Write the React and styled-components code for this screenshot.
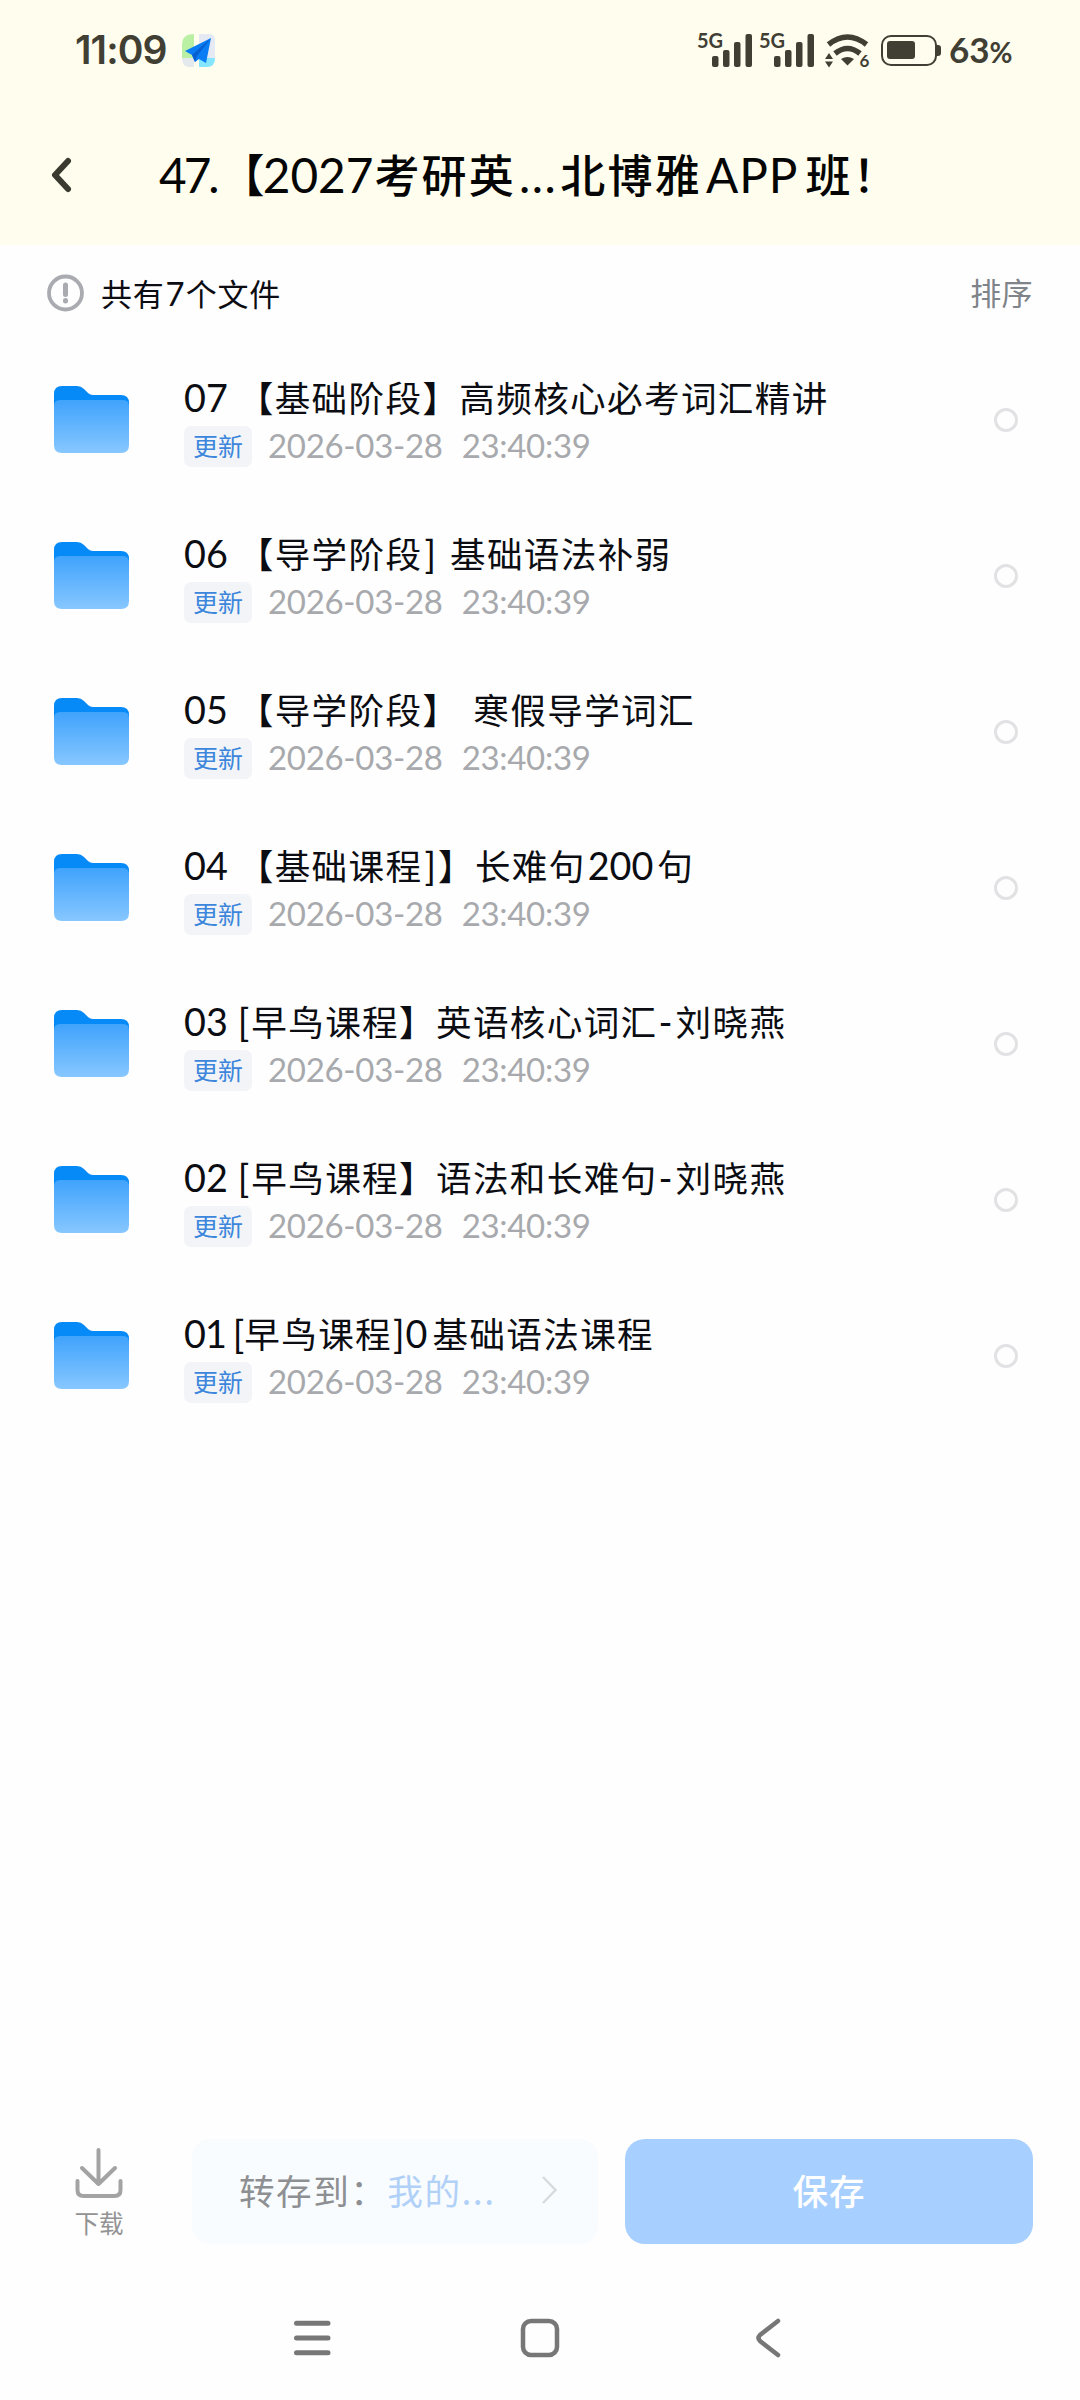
// dependences
import React from 'react';

// styles
import styled, { createGlobalStyle } from 'styled-components';

const GlobalStyle = createGlobalStyle`
    * {
        box-sizing: border-box;
    }

    body {
        margin: 0;
        background: #fefefe;
        font-family: Lato, "Noto Sans CJK SC", sans-serif;
        color: #0b0d12;
    }
`;
const Screen = styled.div`
    width: 1080px;
    height: 2400px;
    display: flex;
    flex-direction: column;
    overflow: hidden;
    background: #fefefe;
`;
const TopArea = styled.header`
    height: 245px;
    background: #fffded;
`;
const StatusBar = styled.div`
    height: 104px;
    padding: 0 67px 0 75px;
    display: flex;
    justify-content: space-between;
    color: #413f34;
`;
const StatusGroup = styled.div`
    display: flex;
    align-items: center;
    height: 100px;
`;
const Clock = styled.span`
    width: 106px;
    font: 600 39px/50px Inter, sans-serif;
    letter-spacing: -0.9px;
`;
const Signal = styled.div`
    display: flex;
    width: 62px;
    height: 36px;
`;
const SignalLabel = styled.span`
    width: 14px;
    margin-left: -1px;
    margin-right: 1px;
    font: 700 20px/16px Lato, sans-serif;
    white-space: nowrap;
`;
const Battery = styled.div`
    width: 56px;
    height: 31px;
    padding: 4px;
    border: 2.5px solid #413f34;
    border-radius: 10px;
`;
const BatteryFill = styled.div`
    width: 28px;
    height: 18px;
    border-radius: 3px;
    background: #413f34;
`;
const BatteryNub = styled.div`
    width: 4px;
    height: 11px;
    margin-right: 8px;
    border-radius: 0 3px 3px 0;
    background: #413f34;
`;
const Percent = styled.span`
    width: 64px;
    font: 700 35px/50px Lato, sans-serif;
    white-space: nowrap;

    small {
        font-size: 28px;
    }
`;
const TitleBar = styled.div`
    height: 141px;
    display: flex;
    align-items: center;
    padding-left: 48px;
`;
const Title = styled.h1`
    margin: 0 0 0 83px;
    display: flex;
    align-items: baseline;
    color: #050505;
    font-size: 45px;
    font-weight: 500;
    line-height: 66px;
    letter-spacing: 2.2px;
    white-space: pre;
`;
const Run = styled.span`
    margin-left: ${props => props.$gap || 0}px;
    font-family: "Noto Sans CJK SC", sans-serif;
`;
const LatinRun = styled(Run)`
    font-family: Lato, sans-serif;
    font-size: 1.06em;
    font-weight: 400;
    letter-spacing: ${props => props.$spacing || 0}px;
`;
const Summary = styled.div`
    height: 96px;
    padding: 0 47px 0 46px;
    display: flex;
    align-items: center;
`;
const Count = styled.div`
    flex: 1;
    margin-left: 17px;
    display: flex;
    align-items: baseline;
    font-size: 31px;
    line-height: 46px;
    letter-spacing: 0.8px;
`;
const Sort = styled.span`
    color: #7e8489;
    font-size: 31px;
    line-height: 46px;
    letter-spacing: 0.4px;
`;
const FileList = styled.ul`
    flex: 1;
    margin: 0;
    padding: 0;
    list-style: none;
`;
const FileRow = styled.li`
    height: 156px;
    padding: 1px 62px 0 54px;
    display: flex;
    align-items: center;
`;
const FileInfo = styled.div`
    flex: 1;
    height: 100px;
    margin-left: 55px;
`;
const FileName = styled.div`
    height: 56px;
    display: flex;
    align-items: baseline;
    font-size: 35.6px;
    line-height: 54px;
    letter-spacing: 1.35px;
    white-space: pre;
`;
const FileMeta = styled.div`
    display: flex;
    align-items: center;
    height: 41px;
    color: #a7a9ad;
    font-size: 33px;
`;
const Badge = styled.span`
    width: 68px;
    height: 41px;
    margin-right: 16px;
    border-radius: 7px;
    background: #f2f4f7;
    color: #3c86dc;
    font-size: 25px;
    line-height: 40px;
    text-align: center;
`;
const Stamp = styled.span`
    height: 41px;
    margin-right: 19px;
    line-height: 38px;
    letter-spacing: -0.3px;
`;
const Radio = styled.span`
    width: 24px;
    height: 24px;
    border: 3px solid #e2e2e4;
    border-radius: 50%;
`;
const ActionBar = styled.footer`
    height: 138px;
    padding: 0 47px 0 75px;
    display: flex;
    align-items: flex-start;
`;
const Download = styled.div`
    width: 48px;
    margin-right: 69px;
    padding-top: 7px;
    display: flex;
    flex-direction: column;
    align-items: center;
    gap: 6px;
    color: #939393;
    font-size: 24.5px;
    line-height: 36px;
    white-space: nowrap;
`;
const Target = styled.div`
    width: 406px;
    height: 105px;
    margin-right: 27px;
    padding: 0 39px 4px 47px;
    display: flex;
    align-items: center;
    border-radius: 18px;
    background: #f9fcfe;
    color: #8d8f92;
    font-family: "Noto Sans CJK SC", sans-serif;
    font-size: 35.6px;
    letter-spacing: 1.5px;
`;
const TargetName = styled.span`
    flex: 1;
    color: #b1d1f8;
`;
const SaveButton = styled.button`
    flex: 1;
    height: 105px;
    padding: 0 0 4px;
    border: 0;
    border-radius: 20px;
    background: #a7cfff;
    color: #fff;
    font: 500 35.6px "Noto Sans CJK SC", sans-serif;
    letter-spacing: 1px;
`;
const NavBar = styled.nav`
    height: 123px;
    padding: 39px 296px 0 292px;
    display: flex;
    justify-content: space-between;
`;

// [text, gap before it, letter spacing]
const title = [
    ['47.', 0, -3],
    ['【', 3],
    ['2027', -4],
    ['考研英', 1],
    ['...', 3, 1.5],
    ['北博雅', 3],
    ['APP', 4, 1],
    ['班！', 7]
];
const files = [
    [['07'], ['【基础阶段】高频核心必考词汇精讲', 10]],
    [['06'], ['【导学阶段', 10], [']', 2], ['基础语法补弱', 14]],
    [['05'], ['【导学阶段】', 10], ['寒假导学词汇', 14]],
    [['04'], ['【基础课程', 10], [']', 2], ['】长难句', 2], ['200', 2], ['句', 4]],
    [['03'], ['[', 10], ['早鸟课程】英语核心词汇', 2], ['-', 1, 3], ['刘晓燕', 0]],
    [['02'], ['[', 10], ['早鸟课程】语法和长难句', 2], ['-', 1, 3], ['刘晓燕', 0]],
    [['01', 0, -1], ['[', 7], ['早鸟课程', 0], [']', 1], ['0', 1], ['基础语法课程', 5]]
];

// Latin pieces use their own font, so the name is drawn run by run
function Runs({ parts }) {
    return parts.map(([text, gap, spacing], i) =>
        /^[\x20-\x7e]+$/.test(text)
            ? <LatinRun key={i} $gap={gap} $spacing={spacing}>{text}</LatinRun>
            : <Run key={i} $gap={gap}>{text}</Run>
    );
}

function AppLogo() {
    return <svg width="35" height="35" viewBox="0 0 35 35">
        <path d="M13 1v24H1V12Q1 1 13 1Z" fill="#b9f0a4" />
        <path d="M18 1h10q6 0 6 6v18H18Z" fill="#e4e9f3" />
        <path d="M1 25h12v9H9Q1 34 1 25Z" fill="#e4e9ee" />
        <path d="M18 25h16q0 9-8 9h-8Z" fill="#86e6ff" />
        <path d="M30 5 4 18l7 4 3 7 4-3 7 4Z" fill="#0a7df5" />
        <path d="M30 5 11 22l3 7 2-6Z" fill="#075fd0" />
    </svg>
}

function SignalIcon() {
    return <Signal>
        <SignalLabel>5G</SignalLabel>
        <svg width="42" height="36" viewBox="0 0 42 36" fill="currentColor">
            <rect x="0" y="24" width="6.5" height="11" rx="2" />
            <rect x="11" y="18" width="6.5" height="17" rx="2" />
            <rect x="22" y="10" width="6.5" height="25" rx="2" />
            <rect x="33.5" y="2" width="6.5" height="33" rx="2" />
        </svg>
    </Signal>
}

function WifiIcon() {
    return <svg width="59" height="48" viewBox="0 -6 59 48">
        <g fill="none" stroke="currentColor" strokeWidth="5.5">
            <path d="M6.5 12.500q19-15 38 0" />
            <path d="M13 21.500q12.500-10 25 0" />
        </g>
        <path d="M19 27q6.500-4 13 0l-6.500 6.500Z" fill="currentColor" />
        <path d="m3 27 4-6 4 6Zm0 2.500h8l-4 6Z" fill="currentColor" />
        <text x="37.500" y="34.500" fontFamily="Lato" fontWeight="700" fontSize="17" fill="currentColor">6</text>
    </svg>
}

function FolderIcon() {
    return <svg width="75" height="67" viewBox="0 0 75 67">
        <defs>
            <linearGradient id="folder" x1="0" y1="0" x2="0" y2="1">
                <stop offset="0" stopColor="#40a3fc" />
                <stop offset="1" stopColor="#87c7ff" />
            </linearGradient>
        </defs>
        <path d="M0 8q0-8 8-8h15q4 0 7 3l4 4q2 2 5 2h28q8 0 8 8v10H0Z" fill="#058af7" />
        <path d="M0 20q0-6 6-6h63q6 0 6 6v39q0 8-8 8H8q-8 0-8-8Z" fill="url(#folder)" />
    </svg>
}

export default function App() {
    return <>
        <GlobalStyle />

        <Screen>
            <TopArea>
                <StatusBar>
                    <StatusGroup>
                        <Clock>11:09</Clock>
                        <AppLogo />
                    </StatusGroup>
                    <StatusGroup>
                        <SignalIcon />
                        <SignalIcon />
                        <WifiIcon />
                        <Battery><BatteryFill /></Battery>
                        <BatteryNub />
                        <Percent>63<small>%</small></Percent>
                    </StatusGroup>
                </StatusBar>

                <TitleBar>
                    <svg width="28" height="42" viewBox="0 0 28 42" fill="none" stroke="#3b3a30" strokeWidth="6" strokeLinecap="round" strokeLinejoin="round">
                        <path d="M20 7 7 21l13 14" />
                    </svg>
                    <Title><Runs parts={title} /></Title>
                </TitleBar>
            </TopArea>

            <Summary>
                <svg width="38" height="38" viewBox="0 0 38 38" fill="none" stroke="#a9abb0">
                    <circle cx="19.500" cy="19" r="16.500" strokeWidth="3.800" />
                    <path d="M19.500 11v9.500M19.500 26.500v.5" strokeWidth="5" strokeLinecap="round" />
                </svg>
                <Count><Runs parts={[['共有'], ['7', 1], ['个文件', 1]]} /></Count>
                <Sort>排序</Sort>
            </Summary>

            <FileList>
                {files.map(parts => <FileRow key={parts[0][0]}>
                    <FolderIcon />
                    <FileInfo>
                        <FileName><Runs parts={parts} /></FileName>
                        <FileMeta>
                            <Badge>更新</Badge>
                            <Stamp>2026-03-28</Stamp>
                            <Stamp>23:40:39</Stamp>
                        </FileMeta>
                    </FileInfo>
                    <Radio />
                </FileRow>)}
            </FileList>

            <ActionBar>
                <Download>
                    <svg width="48" height="54" viewBox="0 0 48 54" fill="none" stroke="#a3a3a3" strokeWidth="4" strokeLinecap="round" strokeLinejoin="round">
                        <path d="M23.500 4v34M7 22l16.500 16L40 22M2.500 35v9q0 6 6 6h31q6 0 6-6v-9" />
                    </svg>
                    下载
                </Download>
                <Target>
                    转存到：
                    <TargetName>我的...</TargetName>
                    <svg width="18" height="34" viewBox="0 0 18 34" fill="none" stroke="#d8dadd" strokeWidth="2.500">
                        <path d="m2 4 12.500 13L2 30" />
                    </svg>
                </Target>
                <SaveButton>保存</SaveButton>
            </ActionBar>

            <NavBar>
                <svg width="41" height="44" viewBox="0 0 41 44" stroke="#777" strokeWidth="5" strokeLinecap="round">
                    <path d="M4.500 7.300H36M4.500 22H36M4.500 36.700H36" />
                </svg>
                <svg width="44" height="44" viewBox="0 0 44 44" fill="none" stroke="#777" strokeWidth="4.500">
                    <rect x="5" y="5" width="34" height="34" rx="8" />
                </svg>
                <svg width="37" height="44" viewBox="0 0 37 44" fill="none" stroke="#777" strokeWidth="4.500" strokeLinecap="round">
                    <path d="M31 5 13 19q-3 3 0 6l18 14" />
                </svg>
            </NavBar>
        </Screen>
    </>
}
